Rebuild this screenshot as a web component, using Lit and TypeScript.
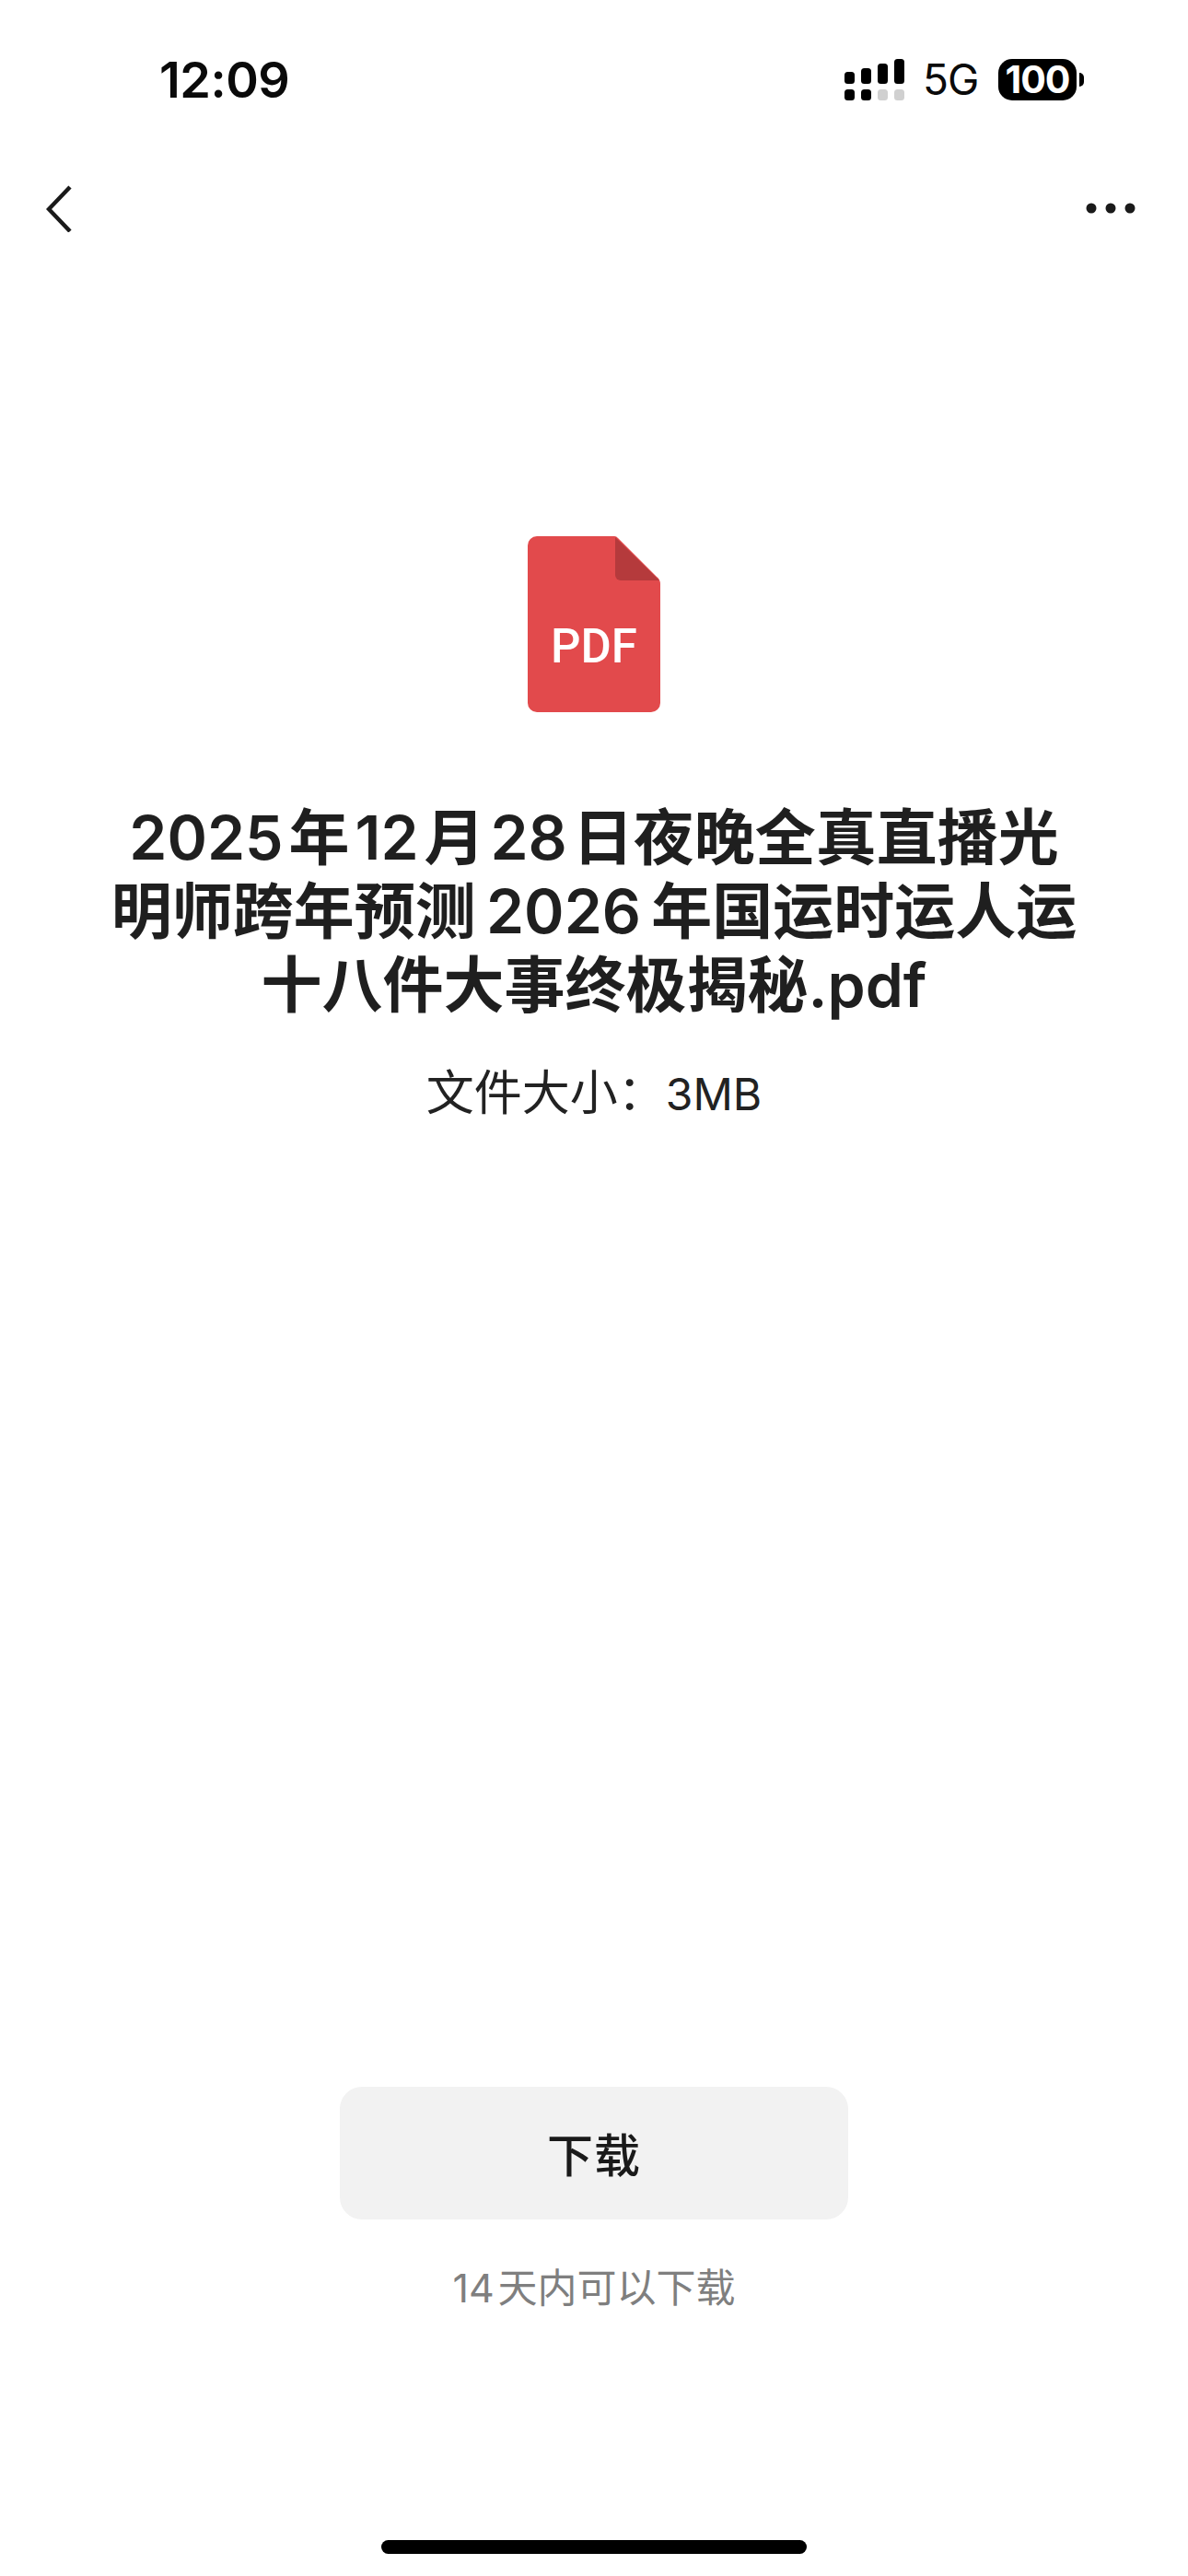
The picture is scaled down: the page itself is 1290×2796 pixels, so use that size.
import { LitElement, html, css } from "lit";
import { customElement } from "lit/decorators.js";

@customElement("app-root")
export class AppRoot extends LitElement {
  static styles = css`
    :host {
      display: block;
      width: 1290px;
      height: 2796px;
      background: #fff;
      font-family: "Inter", "Noto Sans CJK SC", sans-serif;
      color: #1f1f1f;
      overflow: hidden;
    }
    .page { display: flex; flex-direction: column; align-items: center; height: 2796px; }
    .status { width: 100%; height: 172px; box-sizing: border-box; display: flex; justify-content: space-between; align-items: flex-start; padding: 56px 113px 0 173px; }
    .time { font-size: 54px; line-height: 62px; font-weight: 600; color: #0a0a0a; letter-spacing: -0.5px; }
    .right { display: flex; align-items: flex-start; padding-top: 8px; }
    .sig { display: block; width: 65px; height: 45px; margin-right: 20px; }
    .fiveg { font-size: 46px; line-height: 45px; font-weight: 400; color: #0a0a0a; width: 56px; margin-right: 26px; letter-spacing: -1px; }
    .batt { width: 85px; height: 45px; border-radius: 15px; background: #000; color: #fff; font-size: 41px; line-height: 45px; font-weight: 700; text-align: center; letter-spacing: -1px; }
    .nub { width: 5px; height: 15px; margin: 15px 0 0 3px; background: #000; border-radius: 0 5px 5px 0; }
    .nav { width: 100%; height: 110px; box-sizing: border-box; display: flex; justify-content: space-between; align-items: center; padding: 0 57px 0 50px; margin-top: -1px; }
    .back { width: 30px; height: 52px; display: block; }
    .more { width: 54px; height: 12px; display: block; }
    .file { width: 144px; height: 191px; margin-top: 301px; display: block; }
    .pdf { font-family: "Roboto", sans-serif; font-size: 51px; font-weight: 500; fill: #fff; }
    h1 { margin: 96px 0 0; font-size: 66px; line-height: 80px; font-weight: 600; text-align: center; color: #1f1f1f; white-space: nowrap; }
    .sp { margin-left: 0.17em; }
    .sn { margin-left: 0.09em; }
    .size { margin-top: 48px; font-size: 52px; line-height: 60px; color: #222; white-space: nowrap; }
    .size .lat { font-size: 48px; }
    .spacer { flex: 1; }
    .btn { width: 552px; height: 144px; box-sizing: border-box; padding: 0 0 2px; border-radius: 24px; background: #f2f2f2; border: 0; font: inherit; font-size: 50px; font-weight: 500; color: #1a1a1a; display: flex; align-items: center; justify-content: center; letter-spacing: 1px; }
    .note { margin-top: 48px; font-size: 43px; line-height: 52px; color: #7f7f7f; white-space: nowrap; }
    .home { width: 462px; height: 15px; border-radius: 8px; background: #000; margin: 248px 0 24px; }
  `;

  render() {
    return html`
      <div class="page">
        <div class="status">
          <div class="time">12:09</div>
          <div class="right">
            <svg class="sig" viewBox="0 0 65 45">
              <rect x="0" y="14" width="11" height="13" rx="3.5" fill="#000"/>
              <rect x="18" y="10" width="11" height="17" rx="3.5" fill="#000"/>
              <rect x="36" y="5" width="11" height="22" rx="3.5" fill="#000"/>
              <rect x="54" y="0" width="11" height="27" rx="3.5" fill="#000"/>
              <rect x="0" y="33" width="11" height="12" rx="3.5" fill="#000"/>
              <rect x="18" y="33" width="11" height="12" rx="3.5" fill="#000"/>
              <rect x="36" y="33" width="11" height="12" rx="3.5" fill="#d0d0d0"/>
              <rect x="54" y="33" width="11" height="12" rx="3.5" fill="#d0d0d0"/>
            </svg>
            <div class="fiveg">5G</div>
            <div class="batt">100</div>
            <div class="nub"></div>
          </div>
        </div>
        <div class="nav">
          <svg class="back" viewBox="0 0 30 52"><polyline points="26,3 3,27 26,51" fill="none" stroke="#1a1a1a" stroke-width="4.5"/></svg>
          <svg class="more" viewBox="0 0 54 12">
            <circle cx="6" cy="6" r="5.5" fill="#1a1a1a"/><circle cx="27" cy="6" r="5.5" fill="#1a1a1a"/><circle cx="48" cy="6" r="5.5" fill="#1a1a1a"/>
          </svg>
        </div>
        <svg class="file" viewBox="0 0 144 191">
          <path d="M10 0H93a6 6 0 0 1 5 2L140 44a10 10 0 0 1 4 8V181a10 10 0 0 1-10 10H10a10 10 0 0 1-10-10V10A10 10 0 0 1 10 0Z" fill="#e24a4c"/>
          <path d="M95 1 L143 48 H101 a6 6 0 0 1 -6 -6Z" fill="#b53a3c"/>
          <text class="pdf" x="72" y="137" text-anchor="middle">PDF</text>
        </svg>
        <h1>2025<span class="sn">年</span><span class="sn">12</span><span class="sn">月</span><span class="sn">28</span><span class="sn">日夜晚全真直播光</span><br>明师跨年预测<span class="sp">2026</span><span class="sp">年国运时运人运</span><br>十八件大事终极揭秘.pdf</h1>
        <div class="size">文件大小：<span class="lat">3MB</span></div>
        <div class="spacer"></div>
        <button class="btn">下载</button>
        <div class="note">14<span class="sn">天内可以下载</span></div>
        <div class="home"></div>
      </div>
    `;
  }
}
